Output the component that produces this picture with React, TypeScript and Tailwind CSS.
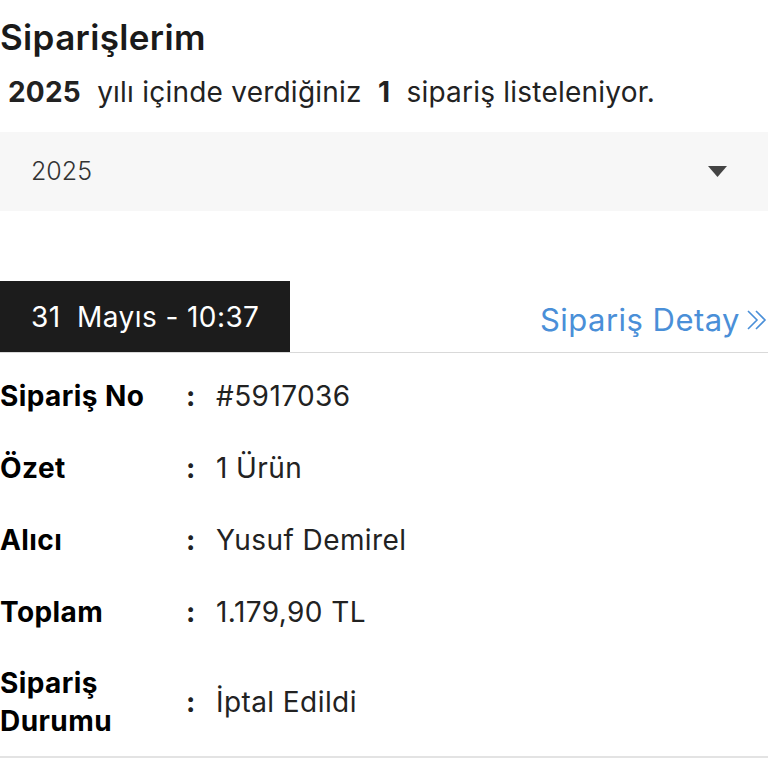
const rows: { label: string; value: string }[] = [
  { label: "Sipariş No", value: "#5917036" },
  { label: "Özet", value: "1 Ürün" },
  { label: "Alıcı", value: "Yusuf Demirel" },
  { label: "Toplam", value: "1.179,90 TL" },
  { label: "Sipariş Durumu", value: "İptal Edildi" },
];

export default function App() {
  return (
    <div className="w-[768px] min-h-[768px] bg-white font-['Inter',sans-serif] text-[#1a1a1a] overflow-hidden">
      <h1 className="mt-[17px] text-[35px] leading-[40px] font-semibold tracking-[0.01em]">Siparişlerim</h1>
      <p className="mt-[17px] pl-2 text-[28px] leading-[36px] tracking-[0.008em] text-[#222] whitespace-pre">
        <span className="font-bold">2025</span>
        {"  yılı içinde verdiğiniz  "}
        <span className="font-bold">1</span>
        {"  sipariş listeleniyor."}
      </p>

      {/* Year select */}
      <div className="mt-[22px] h-[79px] bg-[#f7f7f7] flex items-center justify-between pl-[31px] pr-[41px]">
        <span className="text-[25px] font-light text-[#333]">2025</span>
        <svg width="19" height="11" viewBox="0 0 19 11">
          <polygon points="0,0 19,0 9.5,11" fill="#444" />
        </svg>
      </div>

      {/* Order card */}
      <div className="mt-[70px]">
        <div className="flex items-end justify-between border-b border-[#d9d9d9]">
          <div className="h-[71px] w-[290px] bg-[#1c1c1c] flex items-center pl-[31px]">
            <span className="text-[28px] tracking-[0.015em] text-white whitespace-pre">{"31  Mayıs - 10:37"}</span>
          </div>
          <a className="mb-[14px] text-[31px] leading-[36px] tracking-[0.015em] text-[#4a8fd8] flex items-center gap-[6px]">
            Sipariş Detay
            <svg width="22" height="24" viewBox="0 0 22 24" fill="none" stroke="#4a8fd8" strokeWidth="1.6">
              <path d="M2 3l9 9-9 9" />
              <path d="M10 3l9 9-9 9" />
            </svg>
          </a>
        </div>

        <div className="pt-[7px] border-b-2 border-[#e3e3e3]">
          {rows.map((row, i) => (
            <div key={row.label} className="flex items-center py-4">
              <div
                className={`w-[180px] text-[28px] tracking-[0.015em] font-bold text-black ${
                  i === rows.length - 1 ? "leading-[38px]" : "leading-10"
                }`}
              >
                {row.label}
              </div>
              <div className="w-[36px] text-[28px] leading-10 font-bold text-[#222] pl-[6px]">:</div>
              <div className="text-[28px] leading-10 tracking-[0.015em] text-[#222]">{row.value}</div>
            </div>
          ))}
        </div>
      </div>
    </div>
  );
}
